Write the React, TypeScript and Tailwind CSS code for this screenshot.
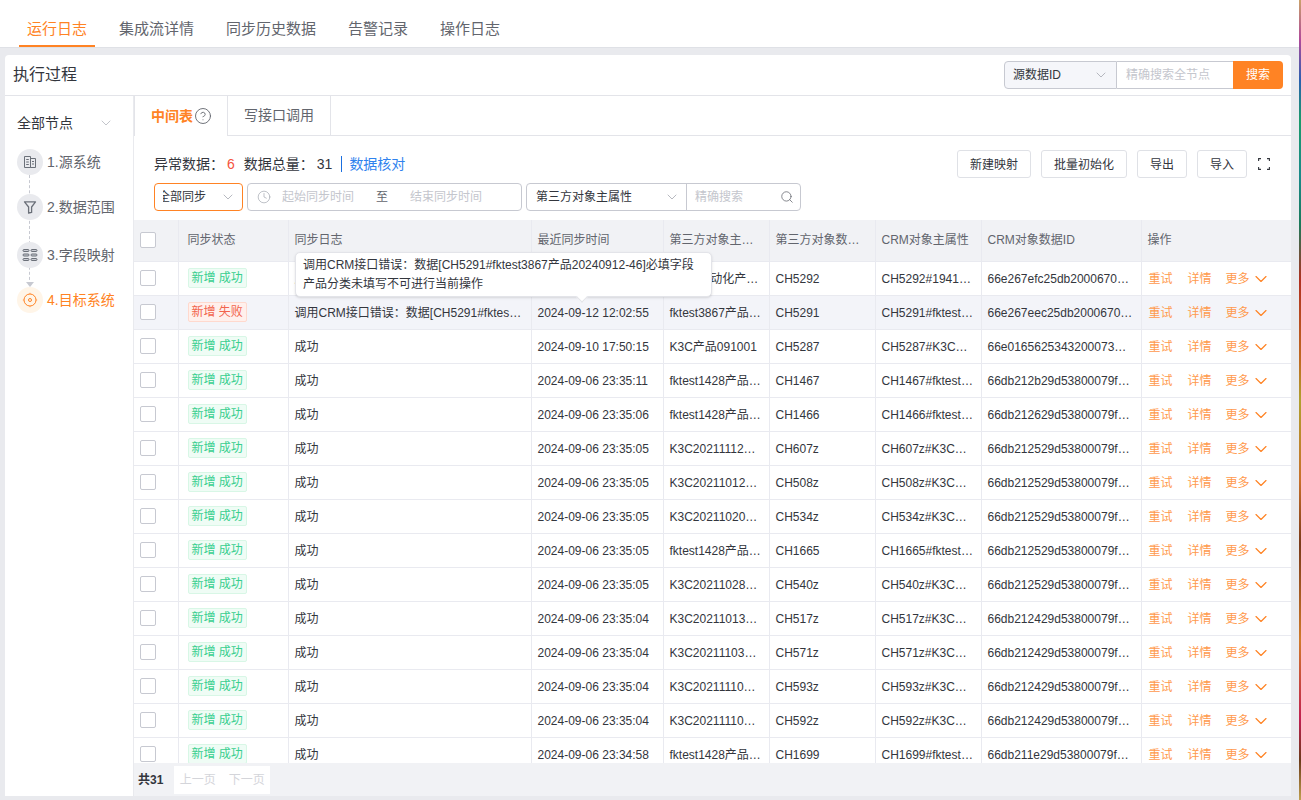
import React from 'react';
import { ChevronDown, Clock, Search, CircleHelp } from 'lucide-react';

const topTabs = ['运行日志', '集成流详情', '同步历史数据', '告警记录', '操作日志'];

const rows = [
  { ok: true, log: '成功', time: '2024-09-12 12:03:10', name: 'fktest自动化产…', id: 'CH5292', main: 'CH5292#1941…', crm: '66e267efc25db2000670…' },
  { ok: false, log: '调用CRM接口错误：数据[CH5291#fktes…', time: '2024-09-12 12:02:55', name: 'fktest3867产品…', id: 'CH5291', main: 'CH5291#fktest…', crm: '66e267eec25db2000670…' },
  { ok: true, log: '成功', time: '2024-09-10 17:50:15', name: 'K3C产品091001', id: 'CH5287', main: 'CH5287#K3C…', crm: '66e0165625343200073…' },
  { ok: true, log: '成功', time: '2024-09-06 23:35:11', name: 'fktest1428产品…', id: 'CH1467', main: 'CH1467#fktest…', crm: '66db212b29d53800079f…' },
  { ok: true, log: '成功', time: '2024-09-06 23:35:06', name: 'fktest1428产品…', id: 'CH1466', main: 'CH1466#fktest…', crm: '66db212629d53800079f…' },
  { ok: true, log: '成功', time: '2024-09-06 23:35:05', name: 'K3C20211112…', id: 'CH607z', main: 'CH607z#K3C…', crm: '66db212529d53800079f…' },
  { ok: true, log: '成功', time: '2024-09-06 23:35:05', name: 'K3C20211012…', id: 'CH508z', main: 'CH508z#K3C…', crm: '66db212529d53800079f…' },
  { ok: true, log: '成功', time: '2024-09-06 23:35:05', name: 'K3C20211020…', id: 'CH534z', main: 'CH534z#K3C…', crm: '66db212529d53800079f…' },
  { ok: true, log: '成功', time: '2024-09-06 23:35:05', name: 'fktest1428产品…', id: 'CH1665', main: 'CH1665#fktest…', crm: '66db212529d53800079f…' },
  { ok: true, log: '成功', time: '2024-09-06 23:35:05', name: 'K3C20211028…', id: 'CH540z', main: 'CH540z#K3C…', crm: '66db212529d53800079f…' },
  { ok: true, log: '成功', time: '2024-09-06 23:35:04', name: 'K3C20211013…', id: 'CH517z', main: 'CH517z#K3C…', crm: '66db212429d53800079f…' },
  { ok: true, log: '成功', time: '2024-09-06 23:35:04', name: 'K3C20211103…', id: 'CH571z', main: 'CH571z#K3C…', crm: '66db212429d53800079f…' },
  { ok: true, log: '成功', time: '2024-09-06 23:35:04', name: 'K3C20211110…', id: 'CH593z', main: 'CH593z#K3C…', crm: '66db212429d53800079f…' },
  { ok: true, log: '成功', time: '2024-09-06 23:35:04', name: 'K3C20211110…', id: 'CH592z', main: 'CH592z#K3C…', crm: '66db212429d53800079f…' },
  { ok: true, log: '成功', time: '2024-09-06 23:34:58', name: 'fktest1428产品…', id: 'CH1699', main: 'CH1699#fktest…', crm: '66db211e29d53800079f…' },
];

function Checkbox() {
  return <div className="w-4 h-4 rounded-[2px] border border-[#c7c9d1] bg-white" />;
}

function SourceIcon() {
  return (
    <svg width="14" height="14" viewBox="0 0 14 14" fill="none" stroke="#6b7079" strokeWidth="1">
      <path d="M1.5 1.5h6v11h-6zM7.5 3.5h5v9h-5zM3.2 4.5h2.6M3.2 7h2.6M3.2 9.5h2.6M9 6.5h2M9 9h2" />
    </svg>
  );
}

function FilterIcon() {
  return (
    <svg width="14" height="14" viewBox="0 0 14 14" fill="none" stroke="#6b7079" strokeWidth="1.3" strokeLinejoin="round">
      <path d="M1.5 1.8h11L8.6 7v5.4L5.6 13V7z" />
    </svg>
  );
}

function FieldIcon() {
  return (
    <svg width="16" height="14" viewBox="0 0 16 14" fill="#c9cbd2" stroke="#6b7079" strokeWidth="1">
      <rect x="1" y="1.5" width="6" height="2" rx="1" />
      <rect x="9" y="1.5" width="6" height="2" rx="1" />
      <rect x="1" y="6" width="6" height="2" rx="1" />
      <rect x="9" y="6" width="6" height="2" rx="1" />
      <rect x="1" y="10.5" width="6" height="2" rx="1" />
      <rect x="9" y="10.5" width="6" height="2" rx="1" />
    </svg>
  );
}

function TargetIcon() {
  return (
    <svg width="16" height="16" viewBox="0 0 16 16" fill="none" stroke="#ff8324" strokeWidth="1">
      <circle cx="8" cy="8" r="6" />
      <circle cx="8" cy="8" r="1.5" />
      <path d="M8 .8v1.2M8 14v1.2M.8 8H2M14 8h1.2" strokeWidth="0.6" />
    </svg>
  );
}

function Step({ icon, label, active, height }: { icon: React.ReactNode; label: string; active?: boolean; height: string }) {
  return (
    <div className={`flex items-start gap-[4px] ${height}`}>
      <div className={`w-[26px] h-[26px] rounded-full flex items-center justify-center ${active ? 'bg-[#fff5e8]' : 'bg-[#e9eaee]'}`}>{icon}</div>
      <span className={`text-[14px] leading-[26px] ${active ? 'text-[#ff8324]' : 'text-[#62656d]'}`}>{label}</span>
    </div>
  );
}

export default function App() {
  const cell = 'border-r border-b border-[#e9eaf0] px-[6px] pt-[2px] whitespace-nowrap';
  return (
    <div className="h-[800px] w-[1301px] overflow-hidden flex bg-[#e9eaee] text-[#33363d] font-['Liberation_Sans','Noto_Sans_CJK_SC',sans-serif]">
      <div className="w-[1299px] flex flex-col">
        <div className="h-[48px] bg-white border-b border-[#dfe1e6] flex items-end pl-[19px]">
          {topTabs.map((t, i) => (
            <div
              key={t}
              className={`h-[29px] px-[8px] mr-[16px] text-[15px] leading-[22px] border-b-2 ${i === 0 ? 'text-[#ff8324] border-[#ff8324]' : 'text-[#62656d] border-transparent'}`}
            >
              {t}
            </div>
          ))}
        </div>

        <div className="ml-[5px] w-[1286px] mt-[7px] flex-1 min-h-0 flex flex-col mb-[4px]">
          <div className="h-[41px] shrink-0 bg-white rounded-t-[4px] border-b border-[#e3e4e9] flex items-center justify-between pl-[8px] pr-[8px]">
            <span className="text-[16px] text-[#33363d]">执行过程</span>
            <div className="flex h-[28px] text-[12px]">
              <div className="w-[113px] bg-[#f5f6fa] border border-[#c7c9d1] rounded-l-[4px] flex items-center justify-between pl-[8px] pr-[7px]">
                <span>源数据ID</span>
                <ChevronDown size={16} strokeWidth={1.2} className="text-[#a4a7b0]" />
              </div>
              <div className="w-[116px] border-y border-[#c7c9d1] flex items-center pl-[9px] text-[#c4c6cd]">精确搜索全节点</div>
              <div className="w-[50px] bg-[#ff8324] rounded-r-[4px] text-white flex items-center justify-center">搜索</div>
            </div>
          </div>

          <div className="flex-1 min-h-0 flex">
            <div className="w-[128px] shrink-0 bg-white pl-[12px] pt-[17px]">
              <div className="flex items-center justify-between pr-[19px] h-[20px] text-[14px] mb-[16px]">
                <span>全部节点</span>
                <ChevronDown size={16} strokeWidth={1} className="text-[#a4a7b0]" />
              </div>
              <div className="relative">
                <div className="absolute left-[12px] top-[26px] h-[110px] border-l border-dashed border-[#c7c9d1]" />
                <div className="absolute left-[9px] top-[133px] border-x-[4px] border-x-transparent border-t-[5px] border-t-[#c7c9d1]" />
                <div className="relative">
                  <Step icon={<SourceIcon />} label="1.源系统" height="h-[45px]" />
                  <Step icon={<FilterIcon />} label="2.数据范围" height="h-[48px]" />
                  <Step icon={<FieldIcon />} label="3.字段映射" height="h-[45px]" />
                  <Step icon={<TargetIcon />} label="4.目标系统" height="h-[30px]" active />
                </div>
              </div>
            </div>

            <div className="ml-px flex-1 min-w-0 bg-white flex flex-col relative">
              <div className="h-[40px] shrink-0 flex border-b border-[#e3e4e9]">
                <div className="relative w-[94px] h-[40px] bg-white border-r border-l border-[#e3e4e9] flex items-center pl-[16px] gap-[1px] text-[14px] font-bold text-[#ff8324]">
                  中间表
                  <CircleHelp size={18} strokeWidth={1.2} className="text-[#62656d]" />
                </div>
                <div className="w-[103px] border-r border-[#e3e4e9] flex items-center justify-center text-[14px] text-[#62656d]">写接口调用</div>
              </div>

              <div className="h-[84px] shrink-0 pl-[20px] pr-[21px] pt-[14px]">
                <div className="flex items-center justify-between h-[28px]">
                  <div className="flex items-center text-[14px] h-[16px]">
                    <span>异常数据：</span>
                    <span className="ml-[3px] text-[#f5533d]">6</span>
                    <span className="ml-[9px]">数据总量：</span>
                    <span className="ml-[3px]">31</span>
                    <span className="ml-[9px] w-px h-[16px] bg-[#1a6fe0]" />
                    <span className="ml-[7px] text-[#2e82ee]">数据核对</span>
                  </div>
                  <div className="flex items-center text-[12px] text-[#33363d]">
                    <div className="w-[74px] h-[28px] pt-px border border-[#dfe1e6] rounded-[3px] flex items-center justify-center">新建映射</div>
                    <div className="ml-[10px] w-[86px] h-[28px] pt-px border border-[#dfe1e6] rounded-[3px] flex items-center justify-center">批量初始化</div>
                    <div className="ml-[10px] w-[50px] h-[28px] pt-px border border-[#dfe1e6] rounded-[3px] flex items-center justify-center">导出</div>
                    <div className="ml-[10px] w-[50px] h-[28px] pt-px border border-[#dfe1e6] rounded-[3px] flex items-center justify-center">导入</div>
                    <svg className="ml-[11px]" width="12" height="12" viewBox="0 0 12 12" fill="none" stroke="#33363d" strokeWidth="1.1">
                      <path d="M.6 3V.6H3M9 .6h2.4V3M11.4 9v2.4H9M3 11.4H.6V9" />
                    </svg>
                  </div>
                </div>
                <div className="flex items-center h-[28px] mt-[5px] text-[12px]">
                  <div className="w-[89px] h-[28px] border border-[#ff8324] rounded-[4px] flex items-center justify-between pl-[8px] pr-[6px] overflow-hidden">
                    <div className="w-[43px] flex justify-end overflow-hidden">
                      <span className="shrink-0 whitespace-nowrap">全部同步</span>
                    </div>
                    <ChevronDown size={16} strokeWidth={1.2} className="text-[#a4a7b0]" />
                  </div>
                  <div className="ml-[4px] w-[275px] h-[28px] border border-[#c7c9d1] rounded-[4px] flex items-center pl-[9px] text-[#c4c6cd]">
                    <Clock size={14} strokeWidth={1.2} className="text-[#a4a7b0]" />
                    <span className="ml-[11px]">起始同步时间</span>
                    <span className="ml-[22px] text-[#62656d]">至</span>
                    <span className="ml-[22px]">结束同步时间</span>
                  </div>
                  <div className="ml-[4px] w-[275px] h-[28px] border border-[#c7c9d1] rounded-[4px] flex items-center">
                    <div className="w-[160px] h-full border-r border-[#c7c9d1] flex items-center justify-between pl-[9px] pr-[6px]">
                      <span>第三方对象主属性</span>
                      <ChevronDown size={16} strokeWidth={1.2} className="text-[#a4a7b0]" />
                    </div>
                    <span className="flex-1 pl-[8px] text-[#c4c6cd]">精确搜索</span>
                    <Search size={14} strokeWidth={1.3} className="mr-[6px] -mt-[1px] text-[#62656d]" />
                  </div>
                </div>
              </div>

              <div className="flex-1 min-h-0 overflow-hidden">
                <table className="w-[1157px] table-fixed border-collapse text-[12px]">
                  <colgroup>
                    <col className="w-[44px]" />
                    <col className="w-[110px]" />
                    <col className="w-[243px]" />
                    <col className="w-[132px]" />
                    <col className="w-[106px]" />
                    <col className="w-[106px]" />
                    <col className="w-[106px]" />
                    <col className="w-[160px]" />
                    <col className="w-[150px]" />
                  </colgroup>
                  <thead>
                    <tr className="h-[41px] bg-[#f1f2f5] text-[#62656d]">
                      <th className="border-r border-b border-[#e9eaf0] pl-[6px] font-normal"><Checkbox /></th>
                      <th className="border-r border-b border-[#e9eaf0] pl-[9px] text-left font-normal">同步状态</th>
                      {['同步日志', '最近同步时间', '第三方对象主…', '第三方对象数…', 'CRM对象主属性', 'CRM对象数据ID', '操作'].map(h => (
                        <th key={h} className="border-r border-b border-[#e9eaf0] px-[6px] text-left font-normal">{h}</th>
                      ))}
                    </tr>
                  </thead>
                  <tbody>
                    {rows.map((r, i) => (
                      <tr key={i} className={`h-[34px] ${i === 1 ? 'bg-[#f3f4f9]' : 'bg-white'}`}>
                        <td className="border-r border-b border-[#e9eaf0] pl-[6px]"><Checkbox /></td>
                        <td className="border-r border-b border-[#e9eaf0] pl-[9px]">
                          <span className={`inline-block h-[20px] leading-[18px] px-[3px] rounded-[2px] border ${r.ok ? 'bg-[#effcf5] border-[#d8f7e6] text-[#38cf8f]' : 'bg-[#fff0ec] border-[#ffd9ce] text-[#f2644d]'}`}>
                            {r.ok ? '新增 成功' : '新增 失败'}
                          </span>
                        </td>
                        <td className={cell}>{r.log}</td>
                        <td className={cell}>{r.time}</td>
                        <td className={cell}>{r.name}</td>
                        <td className={cell}>{r.id}</td>
                        <td className={cell}>{r.main}</td>
                        <td className={cell}>{r.crm}</td>
                        <td className="border-b border-[#e9eaf0] pl-[7px] pt-[2px] text-[#ff9a4d]">
                          <div className="flex items-center">
                            <span>重试</span>
                            <span className="ml-[15px]">详情</span>
                            <span className="ml-[14px]">更多</span>
                            <ChevronDown size={20} strokeWidth={1.4} className="ml-[1px] text-[#ff8324]" />
                          </div>
                        </td>
                      </tr>
                    ))}
                  </tbody>
                </table>
              </div>

              <div className="h-[33px] shrink-0 bg-[#f1f2f5] flex items-center pl-[4px]">
                <span className="text-[12px] font-bold">共31</span>
                <div className="ml-[11px] w-[96px] h-[28px] bg-white flex items-center justify-center gap-[13px] text-[12px] text-[#d4d5da]">
                  <span>上一页</span>
                  <span>下一页</span>
                </div>
              </div>

              <div className="absolute left-[161px] top-[156px] w-[417px] h-[45px] bg-white rounded-[5px] border border-[#e3e4e9] shadow-sm pl-[7px] pt-[3px] text-[12px] leading-[19px] text-[#33363d]">
                <div className="whitespace-nowrap">调用CRM接口错误：数据[CH5291#fktest3867产品20240912-46]必填字段</div>
                <div>产品分类未填写不可进行当前操作</div>
                <div className="absolute left-[282px] -bottom-[5px] w-[8px] h-[8px] bg-white rotate-45 border-r border-b border-[#e3e4e9]" />
              </div>
            </div>
          </div>
        </div>
      </div>
      <div className="w-[2px] h-full bg-[linear-gradient(to_bottom,#c9a26a_0%,#b04a9a_5%,#2a5fb0_10%,#1a9a6a_15%,#1a8a8a_22%,#1a7a5a_28%,#b03020_35%,#c06a20_45%,#b0a030_50%,#c8702a_60%,#7a3a1a_68%,#d07a2a_80%,#c02050_90%,#6a3a1a_95%,#c0a050_100%)]" />
    </div>
  );
}
